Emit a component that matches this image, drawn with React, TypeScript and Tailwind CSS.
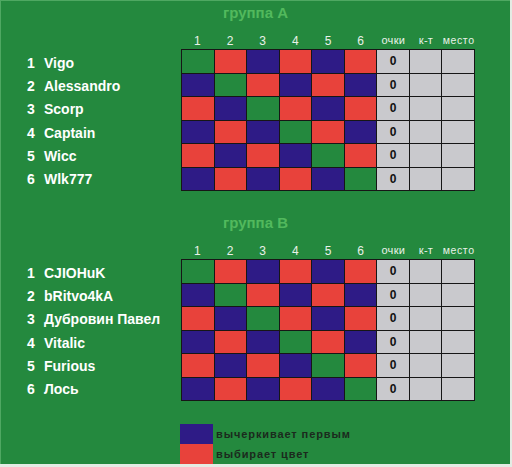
const GROUPS = [
  { title: 'группа A', players: ['Vigo', 'Alessandro', 'Scorp', 'Captain', 'Wicc', 'Wlk777'] },
  { title: 'группа B', players: ['CJIOHuK', 'bRitvo4kA', 'Дубровин Павел', 'Vitalic', 'Furious', 'Лось'] },
];

// G = пусто (диагональ), R = красный, B = синий
const PATTERN = ['GRBRBR', 'BGRBRB', 'RBGRBR', 'BRBGRB', 'RBRBGR', 'BRBRBG'];

const CELL: Record<string, string> = {
  G: 'bg-[#24893e]',
  R: 'bg-[#e8423b]',
  B: 'bg-[#2e1b86]',
};

const HEADERS = ['1', '2', '3', '4', '5', '6'];

function Group({ title, players }: { title: string; players: string[] }) {
  return (
    <div className="flex flex-col">
      {/* Title */}
      <div className="h-[25px] flex items-center justify-center text-[15px] font-bold text-[#52b95d]">{title}</div>

      {/* Column headers */}
      <div className="flex h-[23px] items-end pb-[2px]">
        <div className="w-[180px]" />
        <div className="w-[294px] grid grid-cols-9 text-[#e9f2e9] leading-none">
          {HEADERS.map((h) => (
            <span key={h} className="text-center text-[12px]">{h}</span>
          ))}
          <span className="text-center text-[11px] tracking-[0.3px]">очки</span>
          <span className="text-center text-[11px] tracking-[0.3px]">к-т</span>
          <span className="text-center text-[10.5px] tracking-[0.6px]">место</span>
        </div>
      </div>

      {/* Names + table */}
      <div className="flex">
        <div className="w-[180px] h-[142px] grid grid-rows-6 pl-[26px] pt-[3px]">
          {players.map((p, i) => (
            <div key={p} className="flex items-center text-[14px] font-bold text-white">
              <span className="w-[17px]">{i + 1}</span>
              <span>{p}</span>
            </div>
          ))}
        </div>
        <div className="w-[294px] h-[142px] grid grid-cols-9 grid-rows-6 gap-px p-px bg-[#161616]">
          {PATTERN.map((row, r) => (
            <div key={r} className="contents">
              {row.split('').map((c, j) => (
                <div key={j} className={CELL[c]} />
              ))}
              <div className="bg-[#c9c9cd] flex items-center justify-center text-[12px] font-bold text-[#111]">0</div>
              <div className="bg-[#c9c9cd]" />
              <div className="bg-[#c9c9cd]" />
            </div>
          ))}
        </div>
      </div>
    </div>
  );
}

export default function App() {
  return (
    <div className="w-[512px] h-[467px] bg-[#e4ece4] font-['Liberation_Sans',Arial,sans-serif]">
      <div className="w-[510px] h-[464px] bg-[#24893e] border-t border-l border-[#4fa862] overflow-hidden flex flex-col">
        <Group {...GROUPS[0]} />
        <div className="h-[23px]" />
        <Group {...GROUPS[1]} />

        {/* Legend */}
        <div className="mt-[23px] flex flex-col pl-[179px]">
          <div className="flex items-center h-[20px]">
            <div className="w-[33px] h-full bg-[#2e1b86]" />
            <span className="ml-[3px] text-[11px] font-bold tracking-[0.9px] text-[#1b2a1d]">вычеркивает первым</span>
          </div>
          <div className="flex items-center h-[20px]">
            <div className="w-[33px] h-full bg-[#e8423b]" />
            <span className="ml-[3px] text-[11px] font-bold tracking-[0.9px] text-[#1b2a1d]">выбирает цвет</span>
          </div>
        </div>
      </div>
    </div>
  );
}
